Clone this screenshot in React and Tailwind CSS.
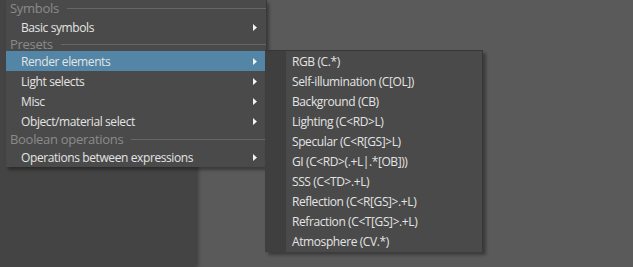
import React from "react";

const font = { fontFamily: '"Open Sans", "Noto Sans", sans-serif' };

const mainItems = [
  { type: "header", label: "Symbols", h: "h-[17px]" },
  { type: "item", label: "Basic symbols" },
  { type: "header", label: "Presets", h: "h-[14px]" },
  { type: "item", label: "Render elements", active: true },
  { type: "item", label: "Light selects" },
  { type: "item", label: "Misc" },
  { type: "item", label: "Object/material select" },
  { type: "header", label: "Boolean operations", h: "h-[16px]" },
  { type: "item", label: "Operations between expressions" },
];

const subItems = [
  "RGB (C.*)",
  "Self-illumination (C[OL])",
  "Background (CB)",
  "Lighting (C<RD>L)",
  "Specular (C<R[GS]>L)",
  "GI (C<RD>(.+L|.*[OB]))",
  "SSS (C<TD>.+L)",
  "Reflection (C<R[GS]>.+L)",
  "Refraction (C<T[GS]>.+L)",
  "Atmosphere (CV.*)",
];

const Arrow = () => (
  <svg width="4" height="7" viewBox="0 0 4 7" className="mr-[9px]">
    <path d="M0 0 L4 3.5 L0 7 Z" fill="#f2f2f2" />
  </svg>
);

const Header = ({ label, h }) => (
  <div className={`flex items-center ${h} pl-[4px] gap-2`}>
    <span className="text-[13px] leading-none tracking-[-0.3px] text-[#8a8a8a]">
      {label}
    </span>
    <div className="flex-1 h-px bg-[#666666]" />
  </div>
);

const Item = ({ label, active }) => (
  <div
    className={`flex items-center justify-between h-[20px] pl-[15px] ${
      active ? "bg-[#5285a6]" : ""
    }`}
  >
    <span className="pt-[2px] text-[12px] leading-none tracking-[-0.4px] text-[#e4e4e4]">
      {label}
    </span>
    <Arrow />
  </div>
);

export default function App() {
  return (
    <div
      className="relative w-[633px] h-[267px] overflow-hidden bg-[#5a5a5a] flex"
      style={font}
    >
      {/* background panels */}
      <div className="w-[196px] h-full bg-[#444444] shadow-[2px_0_4px_rgba(0,0,0,0.35)]" />
      <div className="flex-1 h-full" />

      {/* main menu */}
      <div className="absolute left-[6px] top-0 w-[261px] h-[167px] bg-[#4a4a4a] border-r border-[#3a3a3a] shadow-[2px_3px_3px_rgba(0,0,0,0.35)] flex flex-col">
        {mainItems.map((it, i) =>
          it.type === "header" ? (
            <Header key={i} label={it.label} h={it.h} />
          ) : (
            <Item key={i} label={it.label} active={it.active} />
          )
        )}
      </div>

      {/* submenu */}
      <div className="absolute left-[265px] top-[50px] w-[218px] h-[202px] bg-[#4a4a4a] border-t border-r border-[#373737] shadow-[3px_3px_3px_rgba(0,0,0,0.35)] flex">
        <div className="w-[21px] h-full bg-[#3f3f3f]" />
        <div className="flex-1 flex flex-col">
          {subItems.map((s) => (
            <div key={s} className="h-[20px] flex items-center pl-[6px]">
              <span className="pt-[2px] text-[12px] leading-none tracking-[-0.4px] text-[#e4e4e4]">
                {s}
              </span>
            </div>
          ))}
        </div>
      </div>
    </div>
  );
}
